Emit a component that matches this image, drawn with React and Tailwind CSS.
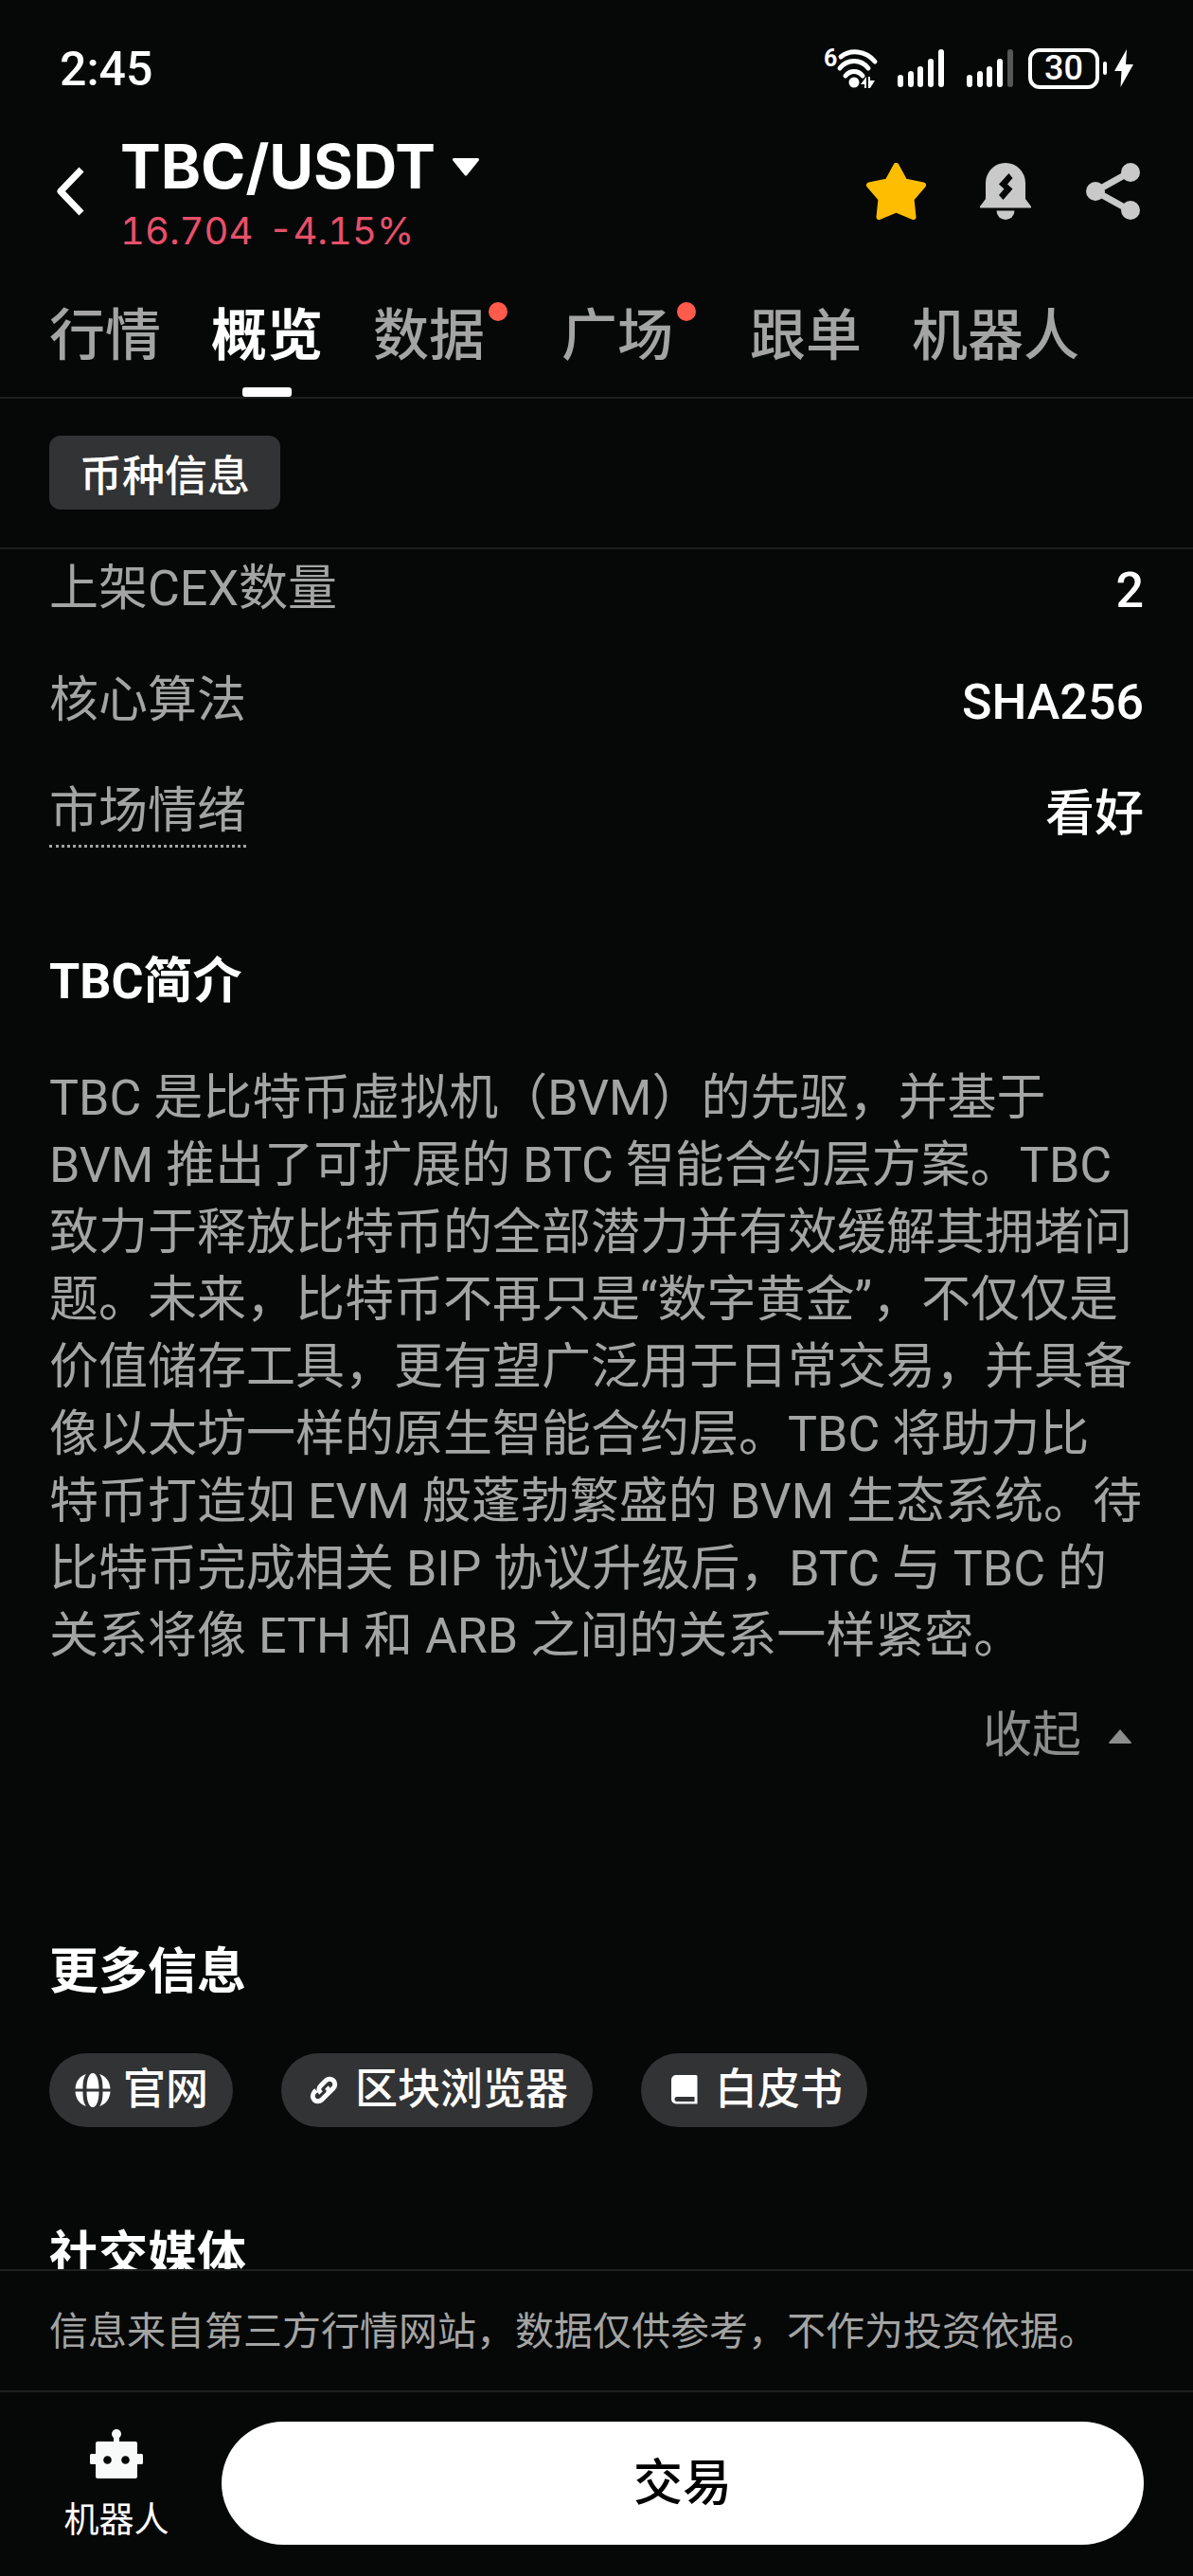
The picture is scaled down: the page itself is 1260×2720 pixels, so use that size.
import { useState } from "react";

const TABS = [
  { key: "market", label: "行情" },
  { key: "overview", label: "概览" },
  { key: "data", label: "数据", dot: true },
  { key: "square", label: "广场", dot: true },
  { key: "copy", label: "跟单" },
  { key: "bot", label: "机器人" },
];

const INTRO =
  "TBC 是比特币虚拟机（BVM）的先驱，并基于 BVM 推出了可扩展的 BTC 智能合约层方案。TBC 致力于释放比特币的全部潜力并有效缓解其拥堵问题。未来，比特币不再只是“数字黄金”，不仅仅是价值储存工具，更有望广泛用于日常交易，并具备像以太坊一样的原生智能合约层。TBC 将助力比\n特币打造如 EVM 般蓬勃繁盛的 BVM 生态系统。待比特币完成相关 BIP 协议升级后，BTC 与 TBC 的关系将像 ETH 和 ARB 之间的关系一样紧密。";

const WifiIcon = () => (
  <svg className="overflow-visible" width="56" height="44" viewBox="0 0 56 44" fill="none" aria-hidden="true">
    <text x="-2" y="20" fontSize="25" fontWeight="700" fill="#fff" fontFamily="Roboto, sans-serif">
      6
    </text>
    <g stroke="#fff" strokeWidth="5" strokeLinecap="round">
      <path d="M16 10C26 2 42 3 52 15" />
      <path d="M15 22C23 12 37 12 45 22" />
      <path d="M21 30C26 24 34 24 39 30" />
    </g>
    <circle cx="30" cy="37" r="5.5" fill="#fff" />
    <path d="M43 31v12h-2v-4h-4z M45 43v-12h2v4h5l-5 8z" fill="#fff" />
  </svg>
);

const SignalIcon = ({ weak }) => (
  <svg width="50" height="42" viewBox="0 0 50 42" fill="#fff" aria-hidden="true">
    <rect x="0" y="28" width="6" height="13" rx="3" />
    <rect x="11" y="24" width="6" height="17" rx="3" />
    <rect x="21" y="19" width="6" height="22" rx="3" />
    <rect x="32" y="11" width="6" height="30" rx="3" />
    <rect x="43" y="1" width="6" height="40" rx="3" fill={weak ? "#555656" : "#fff"} />
  </svg>
);

const StatusBar = () => (
  <div className="mt-10 flex h-16 items-center justify-between px-[63px] font-[Roboto,sans-serif] font-medium">
    <span className="pt-0.5 text-[50px] leading-[64px]">2:45</span>
    <div className="flex items-center">
      <WifiIcon />
      <div className="ml-5 flex gap-[23px]">
        <SignalIcon />
        <SignalIcon weak />
      </div>
      <span className="ml-[15px] flex h-[43px] w-[75px] items-center justify-center rounded-xl border-4 border-white text-[36px] leading-[36px]">
        30
      </span>
      <span className="ml-1 h-3.5 w-1 rounded-full bg-white" />
      <svg className="ml-2" width="20" height="42" viewBox="0 0 20 42" fill="#fff" aria-hidden="true">
        <path d="M13 1L0 24h7.500L6.500 41L20 17h-8z" />
      </svg>
    </div>
  </div>
);

const Header = () => {
  const [starred, setStarred] = useState(true);

  return (
    <header className="flex items-center pt-7 pr-[55px] pl-[59px]">
      <button type="button" aria-label="返回" className="cursor-pointer">
        <svg width="32" height="52" viewBox="0 0 32 52" fill="none" stroke="#fff" strokeWidth="7" strokeLinejoin="round">
          <path d="M27 3L5 26L27 49" />
        </svg>
      </button>

      <div className="ml-[36px] flex-1 pt-1">
        <button type="button" className="flex cursor-pointer items-center gap-[17px] text-[64px] leading-[80px] font-bold">
          TBC/USDT
          <svg width="30" height="20" viewBox="0 0 30 20" fill="#fff" stroke="#fff" strokeWidth="3" strokeLinejoin="round" aria-hidden="true">
            <path d="M2.500 2.500h25L15 18z" />
          </svg>
        </button>
        <p className="flex gap-4 text-[40px] leading-[56px] text-[#e8506a] tabular-nums">
          <span>16.704</span>
          <span>-4.15%</span>
        </p>
      </div>

      <div className="flex items-center gap-[57px]">
        <button type="button" aria-label="收藏" className="cursor-pointer" onClick={() => setStarred(!starred)}>
          <svg width="63" height="60" viewBox="0 0 63 60" fill={starred ? "#ffbd00" : "none"} stroke="#ffbd00" strokeWidth="6" strokeLinejoin="round">
            <path d="M31.500 3L40.500 19.500L60 23.500L47.500 38L49.500 57L31.500 49.500L13.500 57L15.500 38L3 23.500L22.500 19.500Z" />
          </svg>
        </button>
        <button type="button" aria-label="价格提醒" className="cursor-pointer">
          <svg width="54" height="60" viewBox="0 0 54 60" fill="#c8c9c8">
            <path d="M6 21a21 21 0 0 1 42 0v17l6 8v1.500H0V46l6-8z" />
            <path d="M17.500 50.500h19a9.500 9.500 0 0 1-19 0z" />
            <path d="M30.500 11L20 22.500L25.500 27.500L20 34L24.500 39L34.500 27.500L29 22.500L34.500 16Z" fill="#060808" />
          </svg>
        </button>
        <button type="button" aria-label="分享" className="cursor-pointer">
          <svg width="59" height="60" viewBox="0 0 59 60" fill="#c8c9c8">
            <path d="M47 10L11 30L47 50" fill="none" stroke="#c8c9c8" strokeWidth="7" />
            <circle cx="48" cy="10" r="10" />
            <circle cx="11" cy="30" r="10" />
            <circle cx="48" cy="50" r="10" />
          </svg>
        </button>
      </div>
    </header>
  );
};

const TabBar = () => {
  const [active, setActive] = useState("overview");

  return (
    <nav className="flex gap-[53px] border-b-2 border-[#1e1f1f] px-[52px] pt-9">
      {TABS.map((tab) => (
        <button
          key={tab.key}
          type="button"
          onClick={() => setActive(tab.key)}
          className={`flex cursor-pointer flex-col items-center text-[59px] leading-[92px] whitespace-nowrap ${
            active === tab.key ? "font-bold text-white" : "font-medium text-[#a3a4a3]"
          }`}
        >
          <span className="flex">
            {tab.label}
            {tab.dot && <i className="mx-1 mt-[11px] h-5 w-5 rounded-full bg-[#ff5a4b]" />}
          </span>
          <span className={`mt-[9px] h-2.5 w-[52px] rounded-[3px] ${active === tab.key ? "bg-white" : ""}`} />
        </button>
      ))}
    </nav>
  );
};

const InfoRow = ({ label, value, hint }) => (
  <div className="flex h-[78px] items-center justify-between">
    <dt className={`leading-[70px] text-[#a3a4a3] ${hint ? "border-b-3 border-dotted border-[#a3a4a3]" : ""}`}>{label}</dt>
    <dd className="pt-1 leading-[70px] font-medium">{value}</dd>
  </div>
);

const LinkPill = ({ label, children }) => (
  <a href="#" className="flex h-[78px] items-center gap-2.5 rounded-full bg-[#323334] pr-[26px] pl-6 text-[45px] leading-[78px] font-medium">
    <svg width="44" height="44" viewBox="0 0 44 44" fill="#fff" aria-hidden="true">
      {children}
    </svg>
    {label}
  </a>
);

const Overview = () => {
  const [expanded, setExpanded] = useState(true);

  return (
    <main className="min-h-0 flex-1 overflow-y-auto px-[52px] pt-[3px] font-[Roboto,'Noto_Sans_CJK_SC',sans-serif] text-[52px] [scrollbar-width:none]">
      <dl className="flex flex-col gap-10">
        <InfoRow label="上架CEX数量" value="2" />
        <InfoRow label="核心算法" value="SHA256" />
        <InfoRow label="市场情绪" value="看好" hint />
      </dl>

      <h2 className="mt-[104px] leading-[72px] font-bold">TBC简介</h2>
      <p className={`mt-[51px] leading-[71px] whitespace-pre-line text-[#a3a4a3] ${expanded ? "" : "line-clamp-3"}`}>{INTRO}</p>
      <button
        type="button"
        onClick={() => setExpanded(!expanded)}
        className="mt-[34px] ml-auto flex cursor-pointer items-center gap-7 pr-3 leading-[72px] text-[#8c8d8d]"
      >
        {expanded ? "收起" : "展开"}
        <svg className={expanded ? "" : "rotate-180"} width="26" height="17" viewBox="0 0 26 17" fill="currentColor" aria-hidden="true">
          <path d="M13 1L25 15a1 1 0 0 1-1 1H2a1 1 0 0 1-1-1z" />
        </svg>
      </button>

      <h2 className="mt-[178px] leading-[72px] font-bold">更多信息</h2>
      <div className="mt-[49px] flex gap-[51px]">
        <LinkPill label="官网">
          <path d="M22 4c4 0 6.500 7 6.500 16.500h-13C15.500 11 18 4 22 4zM15 5c-3 4-3.500 9-3.500 15.500H3.500C4 13 8 7 15 5zM29 5c7 2 11 8 11.500 15.500h-8C32.500 14 32 9 29 5zM15.500 23.500h13C28.500 33 26 40 22 40s-6.500-7-6.500-16.500zM3.500 23.500h8C11.500 30 12 35 15 39C8 37 4 31 3.500 23.500zM32.500 23.500h8C40 31 36 37 29 39c3-4 3.500-9 3.500-15.500z" />
        </LinkPill>
        <LinkPill label="区块浏览器">
          <g fill="none" stroke="#fff" strokeWidth="5" transform="translate(21 22)">
            <path d="M-3 3C-7-1-5-3-3-5L2-10C8-15 15-8 10-2L4 4" />
            <path d="M3-3C7 1 5 3 3 5L-2 10C-8 15-15 8-10 2L-8 0" />
          </g>
        </LinkPill>
        <LinkPill label="白皮书">
          <path fillRule="evenodd" d="M13 6h21a1.500 1.500 0 0 1 1.500 1.500v29H13a5 5 0 0 1-5-5V11a5 5 0 0 1 5-5zM14 29a2.500 2.500 0 0 0 0 5h18.500v-5z" />
        </LinkPill>
      </div>

      <h2 className="mt-[100px] leading-[72px] font-bold">社交媒体</h2>
    </main>
  );
};

const Footer = () => (
  <footer>
    <p className="border-t-2 border-[#1e1f1f] px-[52px] text-[41px] leading-[126px] text-[#a3a4a3]">
      信息来自第三方行情网站，数据仅供参考，不作为投资依据。
    </p>
    <div className="flex gap-10 border-t-2 border-[#1e1f1f] px-[52px] pt-[31px] pb-[33px]">
      <button type="button" className="flex w-[142px] cursor-pointer flex-col items-center justify-center gap-[18px] pt-1 text-[37px] leading-[48px]">
        <svg width="56" height="56" viewBox="0 0 56 56" fill="#f8faf9" aria-hidden="true">
          <path d="M25 8h6v9h-6z" />
          <circle cx="28" cy="7" r="5" />
          <rect x="6" y="15" width="44" height="39" rx="2" />
          <rect x="0" y="28" width="56" height="11" rx="1.500" />
          <circle cx="18.500" cy="34.500" r="4.300" fill="#060808" />
          <circle cx="37.500" cy="34.500" r="4.300" fill="#060808" />
        </svg>
        机器人
      </button>
      <button type="button" className="h-[130px] flex-1 cursor-pointer rounded-full bg-white text-[52px] leading-[72px] font-medium text-black">
        交易
      </button>
    </div>
  </footer>
);

const App = () => (
  <div lang="zh-CN" className="flex h-screen flex-col bg-[#060808] font-[Inter,'Noto_Sans_CJK_SC',sans-serif] text-white">
    <StatusBar />
    <Header />
    <TabBar />
    <div className="border-b-2 border-[#1e1f1f] px-[52px] pt-[39px] pb-10">
      <button type="button" className="h-[78px] cursor-pointer rounded-xl bg-[#323334] px-8 pt-1 text-[45px] leading-[78px] font-medium">
        币种信息
      </button>
    </div>
    <Overview />
    <Footer />
  </div>
);

export default App;
